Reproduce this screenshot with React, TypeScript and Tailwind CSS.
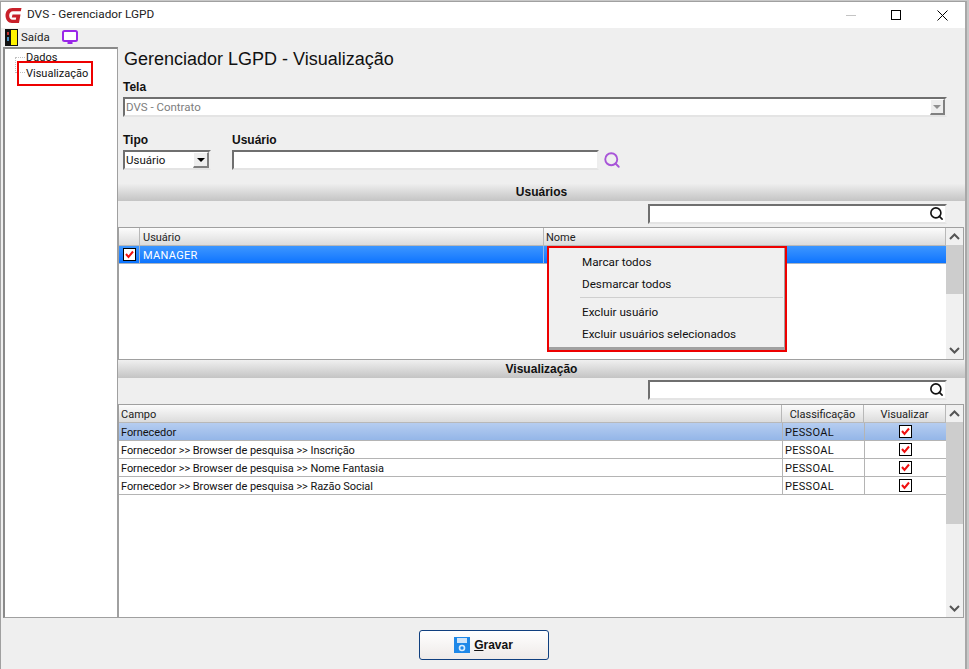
import { Search } from "lucide-react";

const font = "font-['Roboto','Liberation_Sans',Arial,sans-serif]";
const boldFont = "font-['Liberation_Sans',Arial,sans-serif]";

function RedCheck() {
  return (
    <svg width="13" height="13" viewBox="0 0 13 13" className="block">
      <rect x="0.5" y="0.5" width="12" height="12" fill="#fff" stroke="#000" />
      <path d="M3 6l2.5 3L10 3.5" fill="none" stroke="#f01010" strokeWidth="2" />
    </svg>
  );
}

function Chevron({ down }: { down?: boolean }) {
  return (
    <svg width="11" height="7" viewBox="0 0 11 7" className="block">
      <path d={down ? "M1 1l4.5 4.5L10 1" : "M1 6l4.5-4.5L10 6"} fill="none" stroke="#555" strokeWidth="2" />
    </svg>
  );
}

function ScrollBar({ thumb }: { thumb: string }) {
  return (
    <div className="w-[17px] shrink-0 flex flex-col items-center bg-[#f0f0f0]">
      <div className="h-[17px] w-full flex items-center justify-center shrink-0">
        <Chevron />
      </div>
      <div className={`${thumb} w-full bg-[#cdcdcd] shrink-0`} />
      <div className="flex-1" />
      <div className="h-[17px] w-full flex items-center justify-center shrink-0">
        <Chevron down />
      </div>
    </div>
  );
}

function SectionBar({ label }: { label: string }) {
  return (
    <div className={`${boldFont} h-[18px] bg-gradient-to-b from-[#f0f0f0] to-[#c4c4c4] flex items-center justify-center text-[12px] font-bold text-[#111]`}>
      {label}
    </div>
  );
}

function SearchBox() {
  return (
    <div className="flex justify-end pr-[18px]">
      <div className="w-[299px] h-[20px] bg-white border-2 border-[#6f6f6f] border-r-[#eee] border-b-[#e4e4e4] flex items-center justify-end pr-[1px]">
        <Search size={15} strokeWidth={2.6} className="text-[#111] mb-[2px]" />
      </div>
    </div>
  );
}

function HeaderCell({ className, children }: { className: string; children?: React.ReactNode }) {
  return (
    <div className={`${className} h-full bg-gradient-to-b from-[#fcfcfc] to-[#dcdcdc] border-r border-b border-[#b8b8b8] flex items-center pt-[4px] text-[11px] text-[#222] shrink-0`}>
      {children}
    </div>
  );
}

const campos = [
  "Fornecedor",
  "Fornecedor >> Browser de pesquisa >> Inscrição",
  "Fornecedor >> Browser de pesquisa >> Nome Fantasia",
  "Fornecedor >> Browser de pesquisa >> Razão Social",
];

export default function App() {
  return (
    <div className={`${font} relative w-[969px] h-[669px] overflow-hidden bg-[#c8c8c8] flex`}>
      <div className="w-[967px] h-full bg-[#efefef] border-t border-l border-[#a0a0a0] border-r-2 border-r-[#a8a8a8] flex flex-col mt-[1px]">
        {/* title bar */}
        <div className="h-[26px] bg-white flex items-center shrink-0">
          <svg width="17" height="15" viewBox="0 0 17 15" className="ml-[4px]">
            <path d="M16.5 0H7.5C3 0 .5 3.5.5 7.5S3 15 7 15h7l1.5-8.5H7.5l-.7 3h4.4l-.4 2.3H7.6C5.4 11.8 4.2 10 4.2 7.5S5.8 3.2 8 3.2h7.8z" fill="#c8202a" />
          </svg>
          <span className="ml-[5px] text-[11.8px] text-[#222]">DVS - Gerenciador LGPD</span>
          <div className="flex-1" />
          <div className="w-[10px] h-px bg-[#c4c4c4] mr-[35px]" />
          <div className="w-[10px] h-[10px] border border-black mr-[36px]" />
          <svg width="11" height="11" viewBox="0 0 11 11" className="mr-[17px]">
            <path d="M.5.5l10 10M10.5.5l-10 10" stroke="#000" fill="none" />
          </svg>
        </div>
        {/* toolbar */}
        <div className="h-[19px] flex items-center shrink-0">
          <svg width="13" height="17" viewBox="0 0 13 17" className="ml-[4px]">
            <rect x="0" y="0" width="13" height="17" fill="#111" />
            <rect x="6" y="1" width="6" height="15" fill="#fff200" />
            <rect x="2" y="3" width="2" height="3" fill="#c03030" />
            <rect x="2" y="8" width="2" height="4" fill="#4a90c0" />
          </svg>
          <span className="ml-[3px] text-[11.5px] text-[#222]">Saída</span>
          <svg width="16" height="15" viewBox="0 0 16 15" className="ml-[12px]">
            <rect x="1" y="1" width="14" height="10" rx="1.5" fill="#fff" stroke="#9a28e8" strokeWidth="2" />
            <rect x="5.5" y="12" width="5" height="2" fill="#9a28e8" />
          </svg>
        </div>
        {/* body */}
        <div className="flex-1 flex min-h-0">
          {/* tree */}
          <div className="relative w-[115px] ml-[2px] h-[571px] bg-white border-t-2 border-l-2 border-[#8a8a8a] border-r border-b border-r-[#a0a0a0] border-b-[#a0a0a0] shrink-0 text-[11px] text-[#111]">
            <div className="pl-[21px] pt-[1px] leading-[16px]">
              <div>Dados</div>
              <div>Visualização</div>
            </div>
            <div className="absolute left-[10px] top-[8px] w-[10px] h-[16px] border-l border-b border-dotted border-[#c0c0c0]" />
            <div className="absolute left-[10px] top-[8px] w-[10px] border-t border-dotted border-[#c0c0c0]" />
          </div>
          {/* main */}
          <div className="flex-1 min-w-0 flex flex-col">
            <h1 className={`${boldFont} pl-[6px] pt-[1px] h-[31px] text-[18px] leading-[22px] text-[#111]`}>Gerenciador LGPD - Visualização</h1>
            <div className="pl-[5px] pr-[18px]">
              <div className={`${boldFont} text-[12px] font-bold text-[#111] leading-[14px] pt-[2px]`}>Tela</div>
              <div className="mt-[3px] h-[20px] bg-white border-2 border-[#6f6f6f] border-r-[#eee] border-b-[#e4e4e4] flex items-center justify-between">
                <span className="pl-[1px] pt-[1px] text-[11.5px] text-[#7d7d7d]">DVS - Contrato</span>
                <div className="w-[15px] h-[16px] bg-[#eee] border border-r-2 border-b-2 border-[#fff] border-r-[#808080] border-b-[#808080] flex items-center justify-center">
                  <div className="border-x-[4px] border-x-transparent border-t-[4px] border-t-[#909090]" />
                </div>
              </div>
              <div className="flex mt-[16px]">
                <div>
                  <div className={`${boldFont} text-[12px] font-bold text-[#111] leading-[14px]`}>Tipo</div>
                  <div className="mt-[3px] w-[88px] h-[20px] bg-white border-2 border-[#6f6f6f] border-r-[#eee] border-b-[#e4e4e4] flex items-center justify-between">
                    <span className="pl-[1px] pt-[1px] text-[11.5px] text-[#111]">Usuário</span>
                    <div className="w-[16px] h-[16px] bg-[#eee] border border-r-2 border-b-2 border-[#fff] border-r-[#808080] border-b-[#808080] flex items-center justify-center">
                      <div className="border-x-[4px] border-x-transparent border-t-[4px] border-t-black" />
                    </div>
                  </div>
                </div>
                <div className="ml-[21px]">
                  <div className={`${boldFont} text-[12px] font-bold text-[#111] leading-[14px]`}>Usuário</div>
                  <div className="mt-[3px] flex items-center">
                    <div className="w-[367px] h-[20px] bg-white border-2 border-[#6f6f6f] border-r-[#eee] border-b-[#e4e4e4]" />
                    <Search size={18} strokeWidth={2.5} className="ml-[4px] text-[#a855d8]" />
                  </div>
                </div>
              </div>
            </div>
            <div className="mt-[13px]">
              <SectionBar label="Usuários" />
            </div>
            <div className="mt-[3px]">
              <SearchBox />
            </div>
            {/* users grid */}
            <div className="mt-[3px] h-[133px] mr-[1px] bg-white border border-[#a0a0a0] flex">
              <div className="flex-1 min-w-0 flex flex-col">
                <div className="h-[18px] flex shrink-0">
                  <HeaderCell className="w-[21px]" />
                  <HeaderCell className="w-[404px] pl-[3px]">Usuário</HeaderCell>
                  <HeaderCell className="flex-1 !shrink pl-[2px]">Nome</HeaderCell>
                </div>
                <div className="h-[18px] flex bg-gradient-to-b from-[#3c96ff] to-[#0a74ff] border-b border-[#a8b4c4] shrink-0 text-white text-[11px]">
                  <div className="w-[21px] border-r border-[#a8b4c4] flex items-center justify-center">
                    <RedCheck />
                  </div>
                  <div className="w-[404px] border-r border-[#8ab8f0] pl-[3px] pt-[3px] flex items-center tracking-[0.3px]">MANAGER</div>
                </div>
              </div>
              <ScrollBar thumb="h-[49px]" />
            </div>
            <SectionBar label="Visualização" />
            <div className="mt-[2px]">
              <SearchBox />
            </div>
            {/* fields grid */}
            <div className="mt-[4px] h-[214px] mr-[1px] bg-white border border-[#a0a0a0] flex">
              <div className="flex-1 min-w-0 flex flex-col">
                <div className="h-[18px] flex shrink-0">
                  <HeaderCell className="flex-1 !shrink pl-[2px]">Campo</HeaderCell>
                  <HeaderCell className="w-[82px] justify-center">Classificação</HeaderCell>
                  <HeaderCell className="w-[82px] justify-center">Visualizar</HeaderCell>
                </div>
                {campos.map((c, i) => (
                  <div
                    key={c}
                    className={`h-[18px] flex shrink-0 border-b border-[#b4b4b4] text-[11px] text-[#111] ${i === 0 ? "bg-gradient-to-b from-[#b6cdf0] to-[#94b6e8]" : ""}`}
                  >
                    <div className="flex-1 min-w-0 pl-[2px] pt-[3px] flex items-center tracking-[-0.06px]">{c}</div>
                    <div className="w-[82px] border-l border-[#b4b4b4] pl-[2px] pt-[3px] flex items-center tracking-[0.3px]">PESSOAL</div>
                    <div className="w-[82px] border-l border-[#b4b4b4] flex items-center justify-center">
                      <RedCheck />
                    </div>
                  </div>
                ))}
              </div>
              <ScrollBar thumb="h-[102px]" />
            </div>
          </div>
        </div>
        {/* footer */}
        <div className="h-[52px] shrink-0 flex items-start justify-center pt-[12px] pl-[1px]">
          <button className={`${boldFont} w-[130px] h-[30px] rounded-[3px] border border-[#0f3f7f] bg-gradient-to-b from-[#ffffff] to-[#eeeae8] flex items-center justify-center text-[12px] font-bold text-[#111]`}>
            <svg width="16" height="16" viewBox="0 0 16 16" className="mr-[4px]">
              <rect width="16" height="16" fill="#1e88e8" />
              <rect x="3" y="1" width="10" height="5" fill="#cfe4f8" />
              <circle cx="8" cy="11" r="2.5" fill="none" stroke="#d8ecfc" strokeWidth="1.6" />
            </svg>
            <span className="underline">G</span>ravar
          </button>
        </div>
      </div>

      {/* red annotations */}
      <div className="absolute left-[17px] top-[61px] w-[76px] h-[25px] border-2 border-[#ee0000]" />
      <div className="absolute left-[547px] top-[246px] w-[240px] h-[106px] border-2 border-[#ee0000] bg-[#f0f0f0] text-[11.7px] text-[#111] shadow-[inset_-1px_-3px_0_#a0a0a0]">
        <div className="pl-[33px] pt-[3px] leading-[22px]">
          <div>Marcar todos</div>
          <div>Desmarcar todos</div>
          <div className="ml-[-2px] mr-[2px] my-[2px] h-px bg-[#cfcfcf]" />
          <div className="pt-[1px]">Excluir usuário</div>
          <div>Excluir usuários selecionados</div>
        </div>
      </div>
    </div>
  );
}
